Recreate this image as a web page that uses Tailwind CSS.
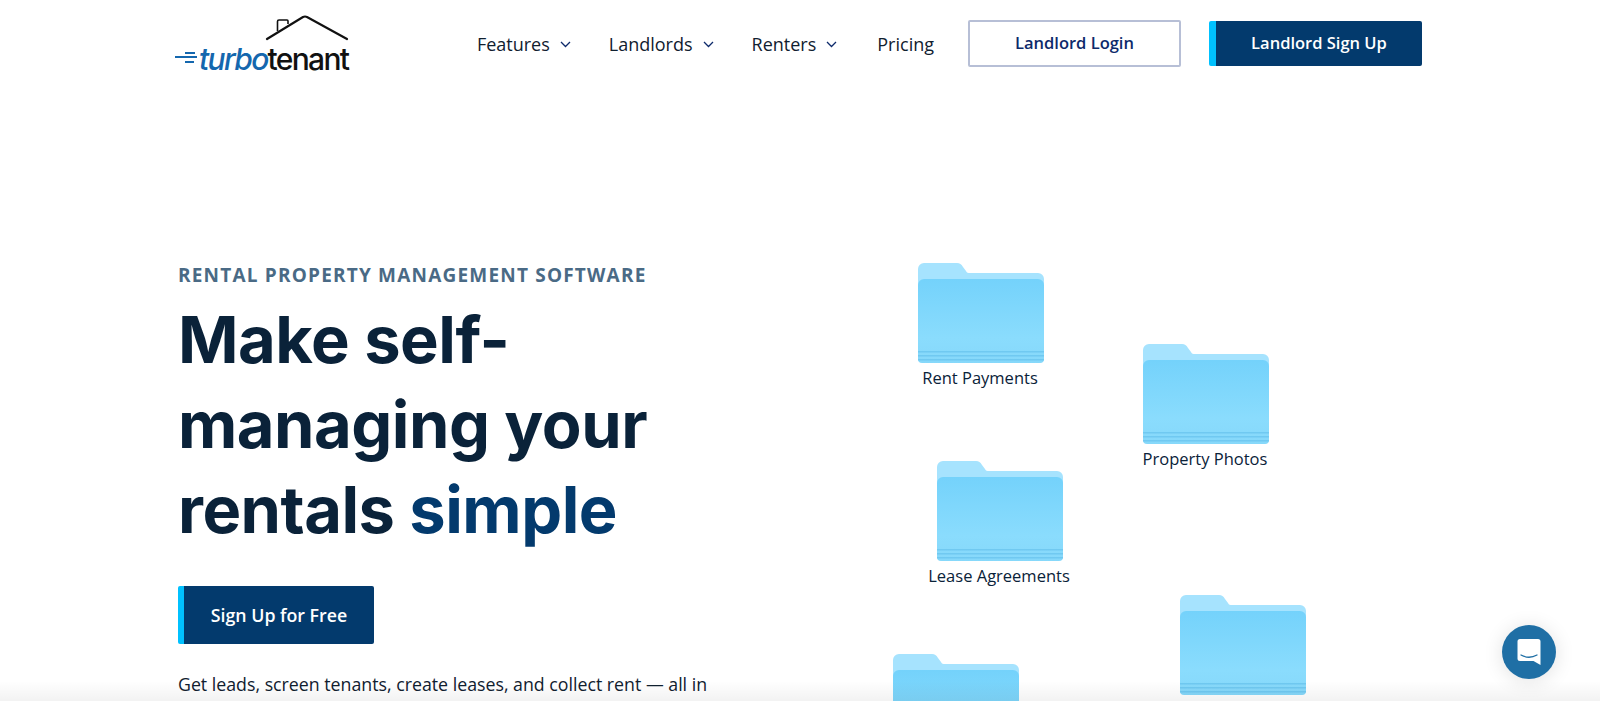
<!DOCTYPE html>
<html lang="en">
<head>
    <meta charset="UTF-8">
    <meta name="viewport" content="width=device-width, initial-scale=1.0">
    <title>TurboTenant - Rental Property Management Software</title>
    <script src="https://cdn.jsdelivr.net/npm/@tailwindcss/browser@4"></script>
</head>
<body class="bg-white h-[701px] overflow-hidden relative font-['Open_Sans',sans-serif] text-[#0b2540]">
    <!-- Folder icon, reused below -->
    <svg class="absolute w-0 h-0">
        <defs>
            <linearGradient id="folderFront" x1="0" y1="0" x2="0" y2="1">
                <stop offset="0" stop-color="#74d2fb"/>
                <stop offset="0.7" stop-color="#8adcfd"/>
                <stop offset="1" stop-color="#86d8fa"/>
            </linearGradient>
            <symbol id="folder" viewBox="0 0 126 100">
                <path d="M0 6a6 6 0 0 1 6-6h33c3 0 4 1 6 4l3 4c1 2 2 2 4 2h68a6 6 0 0 1 6 6v20H0z" fill="#a6e3fe"/>
                <path d="M0 22a6 6 0 0 1 6-6h114a6 6 0 0 1 6 6v74a4 4 0 0 1-4 4H4a4 4 0 0 1-4-4z" fill="url(#folderFront)"/>
                <path d="M0 88h126v1.500H0zM0 92h126v1.500H0zM0 96h126v1.500H0z" fill="#6cc6ee" opacity="0.85"/>
            </symbol>
        </defs>
    </svg>

    <!-- Header -->
    <header class="flex justify-between items-start pl-[174px] pr-[178px] pt-[15px]">
        <a href="#" class="relative block w-[176px] h-[55px]">
            <svg class="absolute left-0 top-0" width="176" height="55" viewBox="0 0 176 55" fill="none">
                <path d="M93 24L129 2q2-1 4 0l40 22" stroke="#111" stroke-width="2.200" stroke-linecap="round"/>
                <path d="M103.500 16V6.500a1.500 1.500 0 0 1 1.500-1.500h8a1 1 0 0 1 1 1v3" stroke="#111" stroke-width="1.600"/>
                <path d="M1 42h22M11 38h10M11 47h9" stroke="#1467ae" stroke-width="2"/>
            </svg>
            <span class="absolute left-[25px] top-[25px] text-[30px] leading-[38px] tracking-[-1.700px] font-medium font-['Inter',sans-serif] whitespace-nowrap"><span class="italic text-[#1467ae]">turbo</span><span class="text-[#111]">tenant</span></span>
        </a>
        <nav class="flex items-start">
            <a href="#" class="flex items-center gap-[10px] text-[18px] leading-[24px] text-[#10202f] mt-[17px] mr-[38px]">Features
                <svg width="11" height="7" viewBox="0 0 11 7" fill="none"><path d="M1 1l4.500 4.500L10 1" stroke="#0d2a6b" stroke-width="1.300"/></svg>
            </a>
            <a href="#" class="flex items-center gap-[10px] text-[18px] leading-[24px] text-[#10202f] mt-[17px] mr-[38px]">Landlords
                <svg width="11" height="7" viewBox="0 0 11 7" fill="none"><path d="M1 1l4.500 4.500L10 1" stroke="#0d2a6b" stroke-width="1.300"/></svg>
            </a>
            <a href="#" class="flex items-center gap-[10px] text-[18px] leading-[24px] text-[#10202f] mt-[17px] mr-[40px]">Renters
                <svg width="11" height="7" viewBox="0 0 11 7" fill="none"><path d="M1 1l4.500 4.500L10 1" stroke="#0d2a6b" stroke-width="1.300"/></svg>
            </a>
            <a href="#" class="text-[18px] leading-[24px] text-[#10202f] mt-[17px] mr-[34px]">Pricing</a>
            <a href="#" class="flex items-center justify-center w-[213px] h-[47px] mt-[5px] mr-[28px] border-2 border-[#b7bfd6] rounded-[2px] text-[16.500px] font-semibold text-[#0d2a6b]">Landlord Login</a>
            <a href="#" class="flex items-center justify-center w-[213px] h-[45px] mt-[6px] border-l-[7px] border-l-[#00c1ff] bg-[#033a6d] rounded-[2px] text-[16.500px] font-semibold text-white">Landlord Sign Up</a>
        </nav>
    </header>

    <!-- Hero -->
    <main class="flex pl-[178px] pt-[193px]">
        <section class="w-[560px] shrink-0">
            <p class="text-[19px] leading-[24px] font-bold tracking-[1.200px] text-[#4a6a85] whitespace-nowrap">RENTAL PROPERTY MANAGEMENT SOFTWARE</p>
            <h1 class="mt-[10px] text-[65px] leading-[85px] font-bold font-['Inter',sans-serif] text-[#0a2239] tracking-[-0.500px]">Make self-<br>managing your<br>rentals <span class="text-[#033a6d]">simple</span></h1>
            <a href="#" class="mt-[34px] flex items-center justify-center w-[196px] h-[58px] border-l-[6px] border-l-[#00c1ff] bg-[#033a6d] rounded-[2px] text-[17.750px] font-semibold text-white">Sign Up for Free</a>
            <p class="mt-[28px] text-[17.750px] leading-[24px] text-[#10202f] whitespace-nowrap">Get leads, screen tenants, create leases, and collect rent — all in</p>
        </section>
    </main>

    <!-- Floating folders -->
    <div class="absolute left-[880px] top-[250px] w-[460px] h-[451px] overflow-hidden">
        <div class="absolute left-[38px] top-[13px] w-[126px] flex flex-col items-center">
            <svg width="126" height="100" class="block shrink-0"><use href="#folder"/></svg>
            <p class="mt-[4px] text-[16.500px] leading-[22px] font-medium text-[#0a2239] whitespace-nowrap -translate-x-px">Rent Payments</p>
        </div>
        <div class="absolute left-[263px] top-[94px] w-[126px] flex flex-col items-center">
            <svg width="126" height="100" class="block shrink-0"><use href="#folder"/></svg>
            <p class="mt-[4px] text-[16.500px] leading-[22px] font-medium text-[#0a2239] whitespace-nowrap -translate-x-px">Property Photos</p>
        </div>
        <div class="absolute left-[57px] top-[211px] w-[126px] flex flex-col items-center">
            <svg width="126" height="100" class="block shrink-0"><use href="#folder"/></svg>
            <p class="mt-[4px] text-[16.500px] leading-[22px] font-medium text-[#0a2239] whitespace-nowrap -translate-x-px">Lease Agreements</p>
        </div>
        <svg width="126" height="100" class="absolute left-[13px] top-[404px]"><use href="#folder"/></svg>
        <svg width="126" height="100" class="absolute left-[300px] top-[345px]"><use href="#folder"/></svg>
    </div>

    <!-- Bottom fade -->
    <div class="absolute left-0 right-0 bottom-0 h-[20px] bg-gradient-to-b from-transparent to-black/5"></div>

    <!-- Chat button -->
    <button class="absolute left-[1502px] top-[625px] w-[54px] h-[54px] rounded-full bg-[#1f6fa5] flex items-center justify-center shadow-[0_2px_20px_rgba(0,0,0,0.12)]">
        <svg width="24" height="28" viewBox="0 0 24 28">
            <path d="M3 1h18a2.500 2.500 0 0 1 2.500 2.500V27l-7-4H3a2.500 2.500 0 0 1-2.500-2.500v-17A2.500 2.500 0 0 1 3 1z" fill="#fff"/>
            <path d="M4 17q8 4.500 16 0" fill="none" stroke="#1f6fa5" stroke-width="1.300" stroke-linecap="round"/>
        </svg>
    </button>
</body>
</html>
